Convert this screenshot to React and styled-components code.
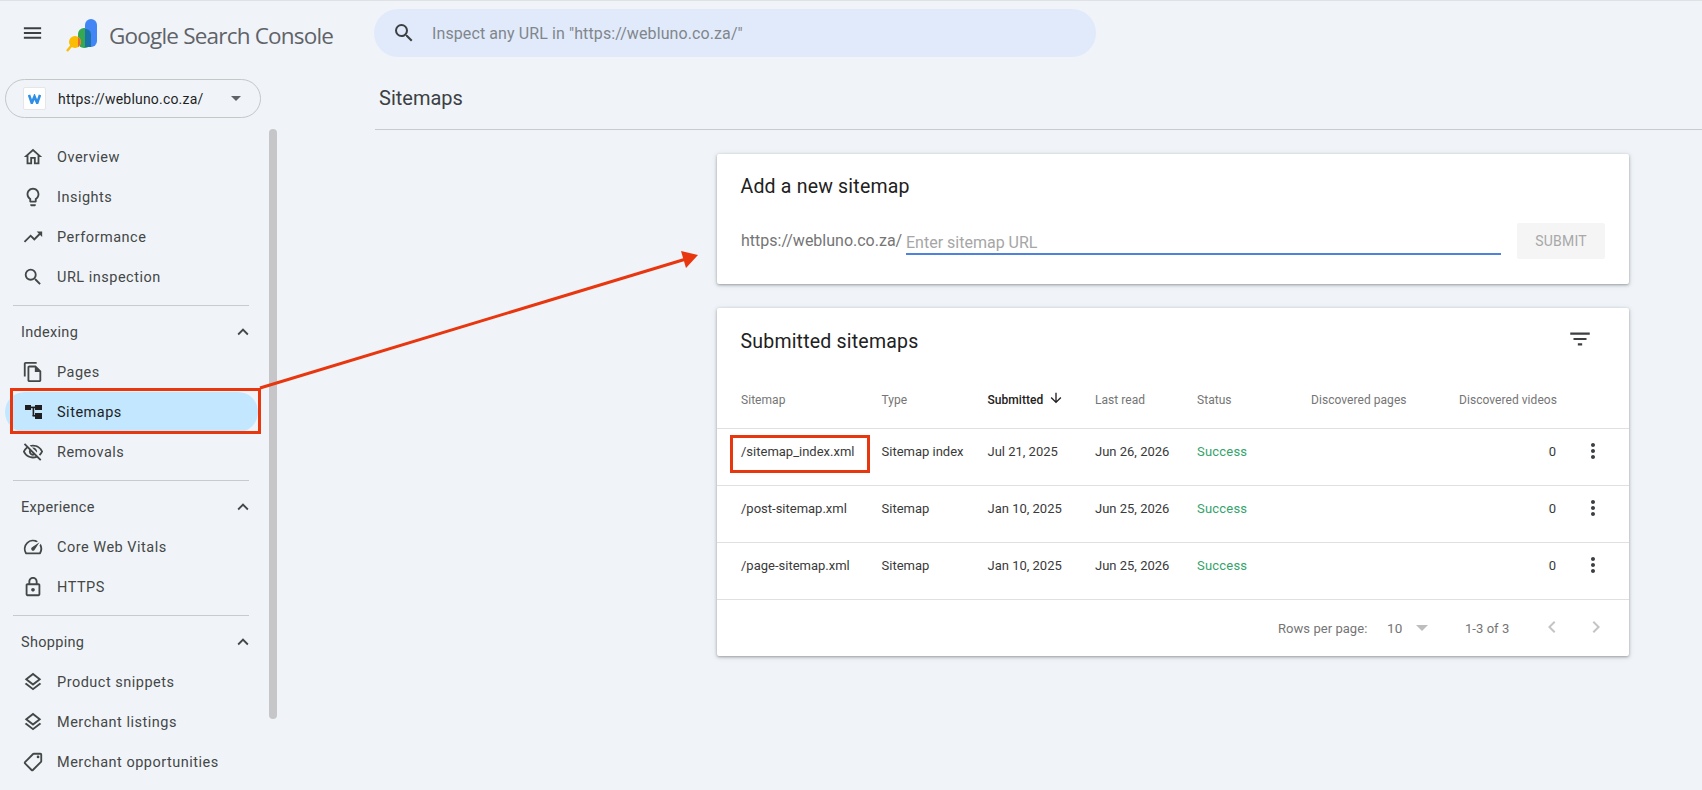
import React from 'react'
import styled, { createGlobalStyle } from 'styled-components'
import {
  MdMenu,
  MdSearch,
  MdOutlineHome,
  MdOutlineLightbulb,
  MdTrendingUp,
  MdOutlineFileCopy,
  MdOutlineVisibilityOff,
  MdOutlineSpeed,
  MdOutlineLock,
  MdOutlineLayers,
  MdOutlineSell,
  MdKeyboardArrowUp,
  MdArrowDownward,
  MdFilterList,
  MdMoreVert,
  MdChevronLeft,
  MdChevronRight,
} from 'react-icons/md'

const SitemapIcon = () => (
  <svg width="22" height="22" viewBox="0 0 22 22" fill="#1f1f1f">
    <rect x="3" y="4" width="6" height="5" />
    <rect x="13" y="4" width="7" height="5" />
    <rect x="13" y="12" width="7" height="6" />
    <rect x="9" y="5.6" width="4" height="1.6" />
    <rect x="10.6" y="6" width="1.6" height="9" />
    <rect x="10.6" y="14" width="3" height="1.6" />
  </svg>
)

const GROUPS = [
  {
    items: [
      { label: 'Overview', icon: <MdOutlineHome /> },
      { label: 'Insights', icon: <MdOutlineLightbulb /> },
      { label: 'Performance', icon: <MdTrendingUp /> },
      { label: 'URL inspection', icon: <MdSearch /> },
    ],
  },
  {
    title: 'Indexing',
    items: [
      { label: 'Pages', icon: <MdOutlineFileCopy /> },
      { label: 'Sitemaps', icon: <SitemapIcon />, active: true },
      { label: 'Removals', icon: <MdOutlineVisibilityOff /> },
    ],
  },
  {
    title: 'Experience',
    items: [
      { label: 'Core Web Vitals', icon: <MdOutlineSpeed /> },
      { label: 'HTTPS', icon: <MdOutlineLock /> },
    ],
  },
  {
    title: 'Shopping',
    items: [
      { label: 'Product snippets', icon: <MdOutlineLayers /> },
      { label: 'Merchant listings', icon: <MdOutlineLayers /> },
      { label: 'Merchant opportunities', icon: <MdOutlineSell />, flip: true },
    ],
  },
]

const ROWS = [
  { path: '/sitemap_index.xml', type: 'Sitemap index', submitted: 'Jul 21, 2025', read: 'Jun 26, 2026' },
  { path: '/post-sitemap.xml', type: 'Sitemap', submitted: 'Jan 10, 2025', read: 'Jun 25, 2026' },
  { path: '/page-sitemap.xml', type: 'Sitemap', submitted: 'Jan 10, 2025', read: 'Jun 25, 2026' },
]

const App = () => {
  return (
    <Page>
      <GlobalStyle />
      <Header>
        <MenuButton>
          <MdMenu />
        </MenuButton>
        <LogoMark width="32" height="34" viewBox="0 0 32 34">
          <path d="M1 32 L6 26" stroke="#fbbc04" strokeWidth="2.4" />
          <rect x="12" y="9" width="13" height="20" rx="6" fill="#34a853" />
          <rect x="19" y="0" width="12" height="28" rx="6" fill="#4285f4" />
          <path d="M19 10 a6 6 0 0 1 6 5 V28 H19 Z" fill="#1a73a8" />
          <circle cx="9" cy="23" r="6" fill="#fbbc04" />
          <path d="M12 18 a6 6 0 0 1 0 10 Z" fill="#ea6a35" />
        </LogoMark>
        <Wordmark>Google Search Console</Wordmark>
        <SearchBar>
          <MdSearch />
          <SearchText>Inspect any URL in "https://webluno.co.za/"</SearchText>
        </SearchBar>
      </Header>

      <Body>
        <Sidebar>
          <PropertyPill>
            <Favicon>
              <svg width="13" height="10" viewBox="0 0 13 10" fill="none" stroke="#2f8fe6" strokeWidth="2.6">
                <path d="M1 1 L3.8 9 L6.5 2.5 L9.2 9 L12 1" />
              </svg>
            </Favicon>
            <PropertyName>https://webluno.co.za/</PropertyName>
            <Caret />
          </PropertyPill>
          <NavArea>
            <Nav>
              {GROUPS.map((group, i) => (
                <NavGroup key={i} $first={i === 0}>
                  {group.title && (
                    <GroupTitle>
                      {group.title}
                      <MdKeyboardArrowUp />
                    </GroupTitle>
                  )}
                  {group.items.map((item) => (
                    <NavItem key={item.label} $active={item.active}>
                      <NavIcon $active={item.active} $flip={item.flip}>
                        {item.icon}
                      </NavIcon>
                      {item.label}
                    </NavItem>
                  ))}
                </NavGroup>
              ))}
            </Nav>
            <ScrollThumb />
          </NavArea>
        </Sidebar>

        <Main>
          <PageTitle>Sitemaps</PageTitle>
          <Cards>
            <AddCard>
              <CardTitle>Add a new sitemap</CardTitle>
              <AddRow>
                <Prefix>https://webluno.co.za/</Prefix>
                <UrlInput placeholder="Enter sitemap URL" />
                <SubmitButton disabled>SUBMIT</SubmitButton>
              </AddRow>
            </AddCard>

            <TableCard>
              <TableTop>
                <CardTitle>Submitted sitemaps</CardTitle>
                <MdFilterList />
              </TableTop>
              <HeadRow>
                <span>Sitemap</span>
                <span>Type</span>
                <SortedHead>
                  Submitted
                  <MdArrowDownward />
                </SortedHead>
                <span>Last read</span>
                <span>Status</span>
                <span>Discovered pages</span>
                <span>Discovered videos</span>
              </HeadRow>
              {ROWS.map((row) => (
                <BodyRow key={row.path}>
                  <span>{row.path}</span>
                  <span>{row.type}</span>
                  <span>{row.submitted}</span>
                  <span>{row.read}</span>
                  <Success>Success</Success>
                  <span />
                  <Count>0</Count>
                  <MoreCell>
                    <MdMoreVert />
                  </MoreCell>
                </BodyRow>
              ))}
              <Pager>
                <PagerLabel>Rows per page:</PagerLabel>
                <PagerSize>10</PagerSize>
                <PagerCaret />
                <PagerRange>1-3 of 3</PagerRange>
                <PagerArrows>
                  <MdChevronLeft />
                  <MdChevronRight />
                </PagerArrows>
              </Pager>
            </TableCard>
          </Cards>
        </Main>
      </Body>

      {/* red markup drawn over the screenshot */}
      <NavMark />
      <RowMark />
      <ArrowLayer width="1702" height="790" viewBox="0 0 1702 790">
        <line x1="260" y1="388" x2="686" y2="259" stroke="#e8370f" strokeWidth="3" />
        <polygon points="698,255 681,251 686,268" fill="#e8370f" />
      </ArrowLayer>
    </Page>
  )
}

export default App

const GRID = '140.5px 106px 107.5px 102px 114px 148px 97px 73px'

const GlobalStyle = createGlobalStyle`
  html, body {
    margin: 0;
    padding: 0;
    background: #f0f4f9;
  }
  * {
    box-sizing: border-box;
  }
`

const Page = styled.div`
  position: relative;
  width: 1702px;
  height: 790px;
  overflow: hidden;
  background: #f0f4f9;
  border-top: 1px solid #dfe1e5;
  font-family: Roboto, 'Liberation Sans', sans-serif;
  color: #1f1f1f;
`
const Header = styled.header`
  display: flex;
  align-items: center;
  height: 65px;
  padding-left: 22px;
`
const MenuButton = styled.div`
  display: flex;
  width: 22px;
  margin-right: 22px;
  margin-top: -2px;
  font-size: 24px;
  color: #3c4043;
  svg {
    margin-left: -1px;
  }
`
const LogoMark = styled.svg`
  margin-top: 4px;
`
const Wordmark = styled.div`
  margin-left: 11px;
  margin-top: 4px;
  width: 255px;
  font-family: 'Open Sans', sans-serif;
  font-size: 22.5px;
  letter-spacing: -0.8px;
  color: #5f6368;
  white-space: nowrap;
`
const SearchBar = styled.div`
  display: flex;
  align-items: center;
  width: 722px;
  height: 48px;
  margin-left: 10px;
  margin-top: -1px;
  padding-left: 18px;
  border-radius: 24px;
  background: #e1eafb;
  color: #3c4043;
  svg {
    font-size: 24px;
  }
`
const SearchText = styled.span`
  margin-left: 16px;
  font-size: 16px;
  letter-spacing: 0.1px;
  color: #80868b;
`
const Body = styled.div`
  display: flex;
`
const Sidebar = styled.aside`
  width: 375px;
  flex: none;
`
const PropertyPill = styled.div`
  display: flex;
  align-items: center;
  width: 256px;
  height: 39px;
  margin: 13px 0 0 5px;
  padding-left: 17px;
  border: 1px solid #c4c7c5;
  border-radius: 20px;
`
const Favicon = styled.div`
  display: flex;
  align-items: center;
  justify-content: center;
  width: 23px;
  height: 23px;
  background: #fff;
  border: 1px solid #e6e6e6;
  border-radius: 2px;
`
const PropertyName = styled.span`
  margin-left: 12px;
  font-size: 14px;
  letter-spacing: 0.2px;
  color: #1f1f1f;
`
const Caret = styled.span`
  margin-left: 28px;
  border-left: 5px solid transparent;
  border-right: 5px solid transparent;
  border-top: 5px solid #5f6368;
`
const NavArea = styled.div`
  display: flex;
  align-items: flex-start;
  margin-top: 11px;
`
const Nav = styled.nav`
  width: 269px;
  padding-top: 8px;
`
const ScrollThumb = styled.div`
  width: 8px;
  height: 590px;
  border-radius: 4px;
  background: #c6c6c8;
`
const NavGroup = styled.div`
  margin: ${({ $first }) => ($first ? '0 20px 0 13px' : '8px 20px 0 13px')};
  border-top: ${({ $first }) => ($first ? 'none' : '1px solid #c7cad0')};
  padding-top: ${({ $first }) => ($first ? '0' : '6px')};
`
const GroupTitle = styled.div`
  display: flex;
  align-items: center;
  justify-content: space-between;
  height: 40px;
  padding-left: 8px;
  font-size: 14.5px;
  letter-spacing: 0.3px;
  color: #444746;
  svg {
    font-size: 22px;
    margin-right: -5px;
  }
`
const NavItem = styled.div`
  display: flex;
  align-items: center;
  height: 40px;
  margin: 0 -9px 0 -8px;
  padding-left: 17px;
  border-radius: 20px;
  font-size: 14.5px;
  letter-spacing: 0.5px;
  color: ${({ $active }) => ($active ? '#1f1f1f' : '#444746')};
  background: ${({ $active }) => ($active ? '#c2e7ff' : 'transparent')};
`
const NavIcon = styled.span`
  display: flex;
  align-items: center;
  justify-content: center;
  width: 22px;
  margin-right: 13px;
  font-size: 22px;
  color: ${({ $active }) => ($active ? '#1f1f1f' : '#444746')};
  transform: ${({ $flip }) => ($flip ? 'scaleX(-1)' : 'none')};
`
const Main = styled.main`
  flex: 1;
`
const PageTitle = styled.h1`
  height: 64px;
  margin: 0;
  padding: 18px 0 0 4px;
  border-bottom: 1px solid #c7cad0;
  font-size: 20px;
  line-height: 28px;
  font-weight: 400;
  color: #3c4043;
`
const Cards = styled.div`
  display: flex;
  flex-direction: column;
  gap: 24px;
  width: 912px;
  margin: 24px 0 0 342px;
`
const Card = styled.section`
  background: #fff;
  border-radius: 2px;
  box-shadow: 0 1px 3px rgba(60, 64, 67, 0.45), 0 1px 6px rgba(60, 64, 67, 0.12);
`
const AddCard = styled(Card)`
  height: 130px;
  padding: 19px 24px 0;
`
const CardTitle = styled.h2`
  margin: 0 0 0 -0.5px;
  font-size: 19.5px;
  line-height: 28px;
  font-weight: 400;
  letter-spacing: 0.2px;
  color: #212121;
`
const AddRow = styled.div`
  display: flex;
  align-items: flex-start;
  margin-top: 22px;
`
const Prefix = styled.span`
  width: 165px;
  flex: none;
  margin-top: 6px;
  font-size: 16px;
  line-height: 24px;
  color: #757575;
`
const UrlInput = styled.input`
  width: 595px;
  height: 32px;
  padding: 8px 0 0;
  border: none;
  border-bottom: 2px solid #4f83db;
  outline: none;
  background: transparent;
  font-family: inherit;
  font-size: 16px;
  &::placeholder {
    color: #a6a6a6;
    opacity: 1;
  }
`
const SubmitButton = styled.button`
  width: 88px;
  height: 36px;
  margin-left: 16px;
  border: none;
  border-radius: 2px;
  background: #f5f5f5;
  font-family: inherit;
  font-size: 14px;
  letter-spacing: 0.2px;
  color: #a8a8a8;
`
const TableCard = styled(Card)`
  height: 348px;
  display: flex;
  flex-direction: column;
`
const TableTop = styled.div`
  display: flex;
  align-items: center;
  justify-content: space-between;
  height: 64px;
  padding: 3px 36px 0 24px;
  svg {
    font-size: 26px;
    color: #3c4043;
    margin-top: -5px;
  }
`
const HeadRow = styled.div`
  display: grid;
  grid-template-columns: ${GRID};
  align-items: center;
  height: 57px;
  padding: 0 0 1px 24px;
  border-bottom: 1px solid #e0e0e0;
  font-size: 12px;
  letter-spacing: 0.05px;
  color: #757575;
  white-space: nowrap;
`
const SortedHead = styled.span`
  display: flex;
  align-items: center;
  color: #212121;
  font-weight: 500;
  svg {
    margin: -3px 0 0 5px;
    font-size: 16px;
  }
`
const BodyRow = styled.div`
  display: grid;
  grid-template-columns: ${GRID};
  height: 57px;
  padding: 14px 0 0 24px;
  border-bottom: 1px solid #e0e0e0;
  font-size: 13px;
  line-height: 18px;
  color: #3a3a3a;
  white-space: nowrap;
`
const Success = styled.span`
  letter-spacing: 0.2px;
  color: #34a36b;
`
const Count = styled.span`
  text-align: right;
`
const MoreCell = styled.span`
  display: flex;
  justify-content: center;
  svg {
    font-size: 24px;
    color: #3c4043;
    margin-top: -4px;
  }
`
const Pager = styled.div`
  display: flex;
  align-items: center;
  flex: 1;
  padding-left: 561px;
  font-size: 13px;
  letter-spacing: 0.05px;
  color: #757575;
`
const PagerLabel = styled.span`
  width: 109px;
`
const PagerSize = styled.span`
  width: 29px;
  font-size: 13.5px;
`
const PagerCaret = styled.span`
  border-left: 6px solid transparent;
  border-right: 6px solid transparent;
  border-top: 6px solid #bdbdbd;
`
const PagerRange = styled.span`
  width: 80px;
  margin-left: 37px;
`
const PagerArrows = styled.span`
  display: flex;
  gap: 20px;
  font-size: 24px;
  color: #c4c4c4;
  margin-left: -5px;
  margin-top: -3px;
`
const NavMark = styled.div`
  position: absolute;
  left: 10px;
  top: 387px;
  width: 251px;
  height: 46px;
  border: 3px solid #e8370f;
`
const RowMark = styled.div`
  position: absolute;
  left: 730px;
  top: 434px;
  width: 140px;
  height: 38px;
  border: 3px solid #e8370f;
`
const ArrowLayer = styled.svg`
  position: absolute;
  left: 0;
  top: -1px;
  pointer-events: none;
`
